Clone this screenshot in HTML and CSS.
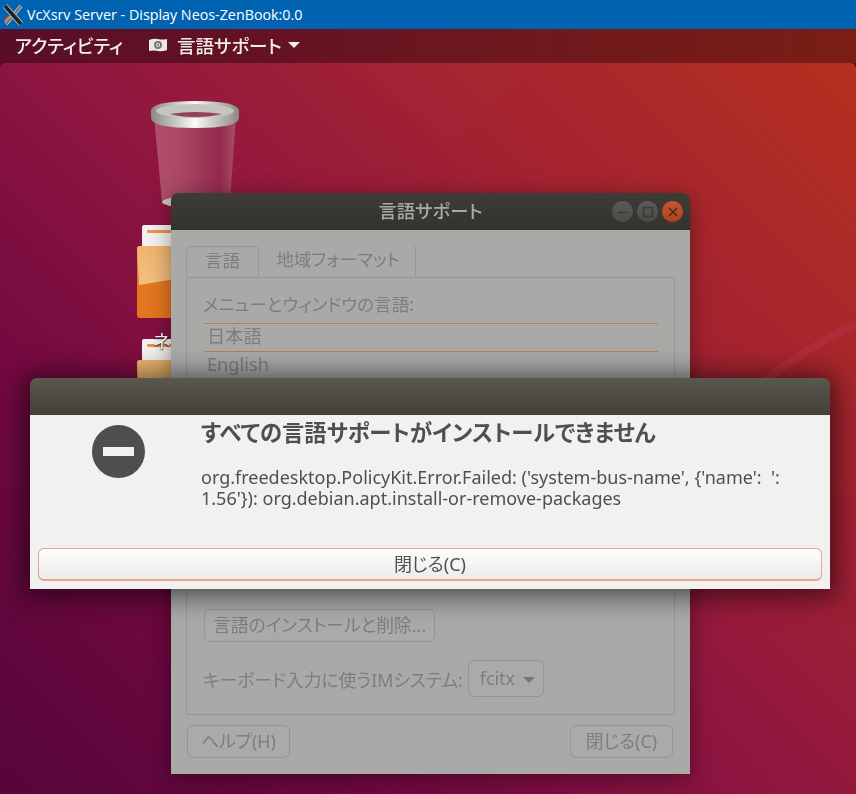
FILE: index.html
```html
<!DOCTYPE html>
<html lang="ja">
<head>
    <meta name="viewport" content="width=device-width, initial-scale=1.0">
    <title>VcXsrv Server - Display Neos-ZenBook:0.0</title>
    <link rel="stylesheet" href="styles.css">
</head>
<body>

    <div class="host-bar">
        <svg class="host-logo" width="22" height="22" viewBox="0 0 22 22">
            <path d="M2 16 Q6 10 12 12 Q8 17 4 20" fill="#c0603a"/>
            <path d="M19 2 L4 20" stroke="#d5d6d2" stroke-width="3.6"/>
            <path d="M19 2 L4 20" stroke="#6d706c" stroke-width="2.2"/>
            <path d="M3 2 L19 20" stroke="#c9ced3" stroke-width="5.4"/>
            <path d="M3 2 L19 20" stroke="#1e2227" stroke-width="3.8"/>
        </svg>
        <span>VcXsrv Server - Display Neos-ZenBook:0.0</span>
    </div>

    <div class="screen">
        <div class="top-bar">
            <span class="activities">アクティビティ</span>
            <span class="app-menu">
                <svg width="20" height="16" viewBox="0 0 20 16">
                    <path d="M1 3 Q6 1 10 2 T19 2 V13 Q14 15 10 14 T1 14 Z" fill="#e9e9e6"/>
                    <circle cx="10" cy="8" r="4" fill="#77777a"/>
                    <circle cx="10" cy="8" r="2" fill="#e9e9e6"/>
                    <circle cx="10" cy="8" r="1" fill="#66666a"/>
                </svg>
                言語サポート
                <i class="caret"></i>
            </span>
        </div>

        <div class="desktop">
            <svg class="arcs" width="856" height="731" viewBox="0 0 856 731">
                <path d="M856 261 Q805 285 765 318" fill="none" stroke="#b02c38" stroke-width="8"/>
                <path d="M340 0 H535 L455 82 Z" fill="#ffffff" opacity="0.012"/>
            </svg>

            <svg class="desk-icon trash" width="90" height="112" viewBox="0 0 90 112">
                <defs>
                    <linearGradient id="can" x1="0" x2="1" y1="0" y2="0">
                        <stop offset="0" stop-color="#b0506c"/>
                        <stop offset="0.4" stop-color="#a84462"/>
                        <stop offset="0.8" stop-color="#93294c"/>
                        <stop offset="1" stop-color="#a84f68"/>
                    </linearGradient>
                    <linearGradient id="rim" x1="0" x2="1" y1="0" y2="0">
                        <stop offset="0" stop-color="#8a8a82"/>
                        <stop offset="0.5" stop-color="#fafaf6"/>
                        <stop offset="1" stop-color="#8a8a82"/>
                    </linearGradient>
                </defs>
                <path d="M4 16 L12 102 Q45 112 80 102 L86 16 Z" fill="url(#can)"/>
                <ellipse cx="45" cy="102" rx="33" ry="6" fill="#c8c8c0"/>
                <path d="M1 11 Q1 1 45 1 Q89 1 89 11 V18 Q89 28 45 28 Q1 28 1 18 Z" fill="url(#rim)"/>
                <ellipse cx="45" cy="11" rx="39" ry="7" fill="#c4c5be"/>
                <path d="M20 14 Q45 10 72 14 Q60 17 45 17 Q30 17 20 14 Z" fill="#9a3f58"/>
            </svg>

            <svg class="desk-icon folder-a" width="50" height="96" viewBox="0 0 50 96">
                <use href="#folder"/>
            </svg>
            <svg class="desk-icon folder-b" width="50" height="96" viewBox="0 0 50 96">
                <defs>
                    <linearGradient id="folder-top" x1="0" x2="0" y1="0" y2="1">
                        <stop offset="0" stop-color="#efb46c"/>
                        <stop offset="1" stop-color="#f1c083"/>
                    </linearGradient>
                    <g id="folder">
                        <rect x="5" y="0" width="45" height="30" rx="2" fill="#f3f1ed"/>
                        <rect x="10" y="5" width="40" height="3" rx="1" fill="#ef9350"/>
                        <rect x="0" y="21" width="50" height="72" rx="3" fill="#e3761f"/>
                        <path d="M0 24 Q0 21 3 21 H50 V52 L2 60 Z" fill="url(#folder-top)"/>
                    </g>
                </defs>
                <use href="#folder"/>
            </svg>
            <span class="desk-label">ネ</span>

            <section class="window main">
                <header class="title-bar">
                    言語サポート
                    <div class="win-buttons">
                        <span class="win-btn"><svg width="12" height="12" viewBox="0 0 12 12"><path d="M1 6.5 H11" stroke="#3b3b38" stroke-width="1.6"/></svg></span>
                        <span class="win-btn"><svg width="12" height="12" viewBox="0 0 12 12"><rect x="1.5" y="1.5" width="9" height="9" fill="none" stroke="#3b3b38" stroke-width="1.6"/></svg></span>
                        <span class="win-btn close"><svg width="12" height="12" viewBox="0 0 12 12"><path d="M2 2 L10 10 M10 2 L2 10" stroke="#4a2a1c" stroke-width="1.5"/></svg></span>
                    </div>
                </header>
                <div class="main-body">
                    <div class="tabs">
                        <span class="tab active">言語</span>
                        <span class="tab">地域フォーマット</span>
                    </div>
                    <div class="panel">
                        <div class="panel-label">メニューとウィンドウの言語:</div>
                        <ul class="lang-list">
                            <li class="lang first">日本語</li>
                            <li class="lang">English</li>
                        </ul>
                        <div class="hidden-note">起動時とログイン画面にも同じ言語を使用します。</div>
                        <button class="btn install">言語のインストールと削除...</button>
                        <div class="im-row">
                            キーボード入力に使うIMシステム:
                            <span class="btn combo">fcitx <i class="caret dim"></i></span>
                        </div>
                    </div>
                    <div class="actions">
                        <button class="btn">ヘルプ(H)</button>
                        <button class="btn">閉じる(C)</button>
                    </div>
                </div>
            </section>

            <section class="window dialog">
                <header class="title-bar"></header>
                <div class="dialog-body">
                    <div class="dialog-content">
                        <div class="stop-icon"><i></i></div>
                        <div class="dialog-text">
                            <h1>すべての言語サポートがインストールできません</h1>
                            <p>org.freedesktop.PolicyKit.Error.Failed: ('system-bus-name', {'name':&nbsp; ':<br>1.56'}): org.debian.apt.install-or-remove-packages</p>
                        </div>
                    </div>
                    <button class="dialog-btn">閉じる(C)</button>
                </div>
            </section>
        </div>
    </div>

</body>
</html>
```

FILE: styles.css
```css
html, body {
    margin: 0;
    height: 100%;
    overflow: hidden;
    background: #56063a;
}

body {
    display: flex;
    flex-direction: column;
    font-family: "Noto Sans", "Noto Sans CJK JP", sans-serif;
    font-feature-settings: "palt";
}

button {
    font: inherit;
}

.host-bar {
    flex: 0 0 29px;
    display: flex;
    align-items: center;
    gap: 3px;
    padding-left: 2px;
    background: #0063b1;
    color: #fff;
    font-family: "Open Sans", sans-serif;
    font-size: 14.3px;
}

.screen {
    flex: 1;
    display: flex;
    flex-direction: column;
    background: #5f1020;
    filter: blur(0.35px);
}

.top-bar {
    flex: 0 0 34px;
    box-sizing: border-box;
    display: flex;
    align-items: center;
    gap: 25px;
    padding: 0 0 2px 15px;
    background: linear-gradient(90deg, #590d28 0%, #6b1620 50%, #7a1e15 100%);
    color: #f0eeea;
    font-size: 18.2px;
    font-weight: 500;
}

.app-menu {
    display: flex;
    align-items: center;
    gap: 9px;
    font-size: 18.5px;
}

.caret {
    width: 0;
    height: 0;
    margin-left: -3px;
    border: 6px solid transparent;
    border-top: 6px solid #f0eeea;
    border-bottom: 0;
}

.caret.dim {
    display: inline-block;
    margin-left: 3px;
    vertical-align: middle;
    border-width: 6px;
    border-top-color: #777674;
    border-bottom: 0;
}

.desktop {
    flex: 1;
    position: relative;
    overflow: hidden;
    border-radius: 6px 6px 0 0;
    background: linear-gradient(225deg, #b5301f 0%, #a5242f 25%, #901640 50%, #700840 75%, #56063a 100%);
}

.arcs {
    position: absolute;
    top: 0;
    left: 0;
}

/* desktop icons */
.desk-icon {
    position: absolute;
}

.trash {
    left: 150px;
    top: 37px;
}

.folder-a {
    left: 137px;
    top: 162px;
}

.folder-b {
    left: 137px;
    top: 276px;
}

.desk-label {
    position: absolute;
    left: 153px;
    top: 264px;
    color: #fff;
    font-size: 18px;
    text-shadow: 0 1px 2px #000;
}

/* windows */
.window {
    position: absolute;
    display: flex;
    flex-direction: column;
    border-radius: 7px 7px 0 0;
}

.title-bar {
    flex: 0 0 37px;
    box-sizing: border-box;
    position: relative;
    display: flex;
    align-items: center;
    justify-content: center;
    border-radius: 7px 7px 0 0;
}

.main {
    left: 171px;
    top: 130px;
    width: 519px;
    height: 581px;
    box-shadow: 0 4px 22px rgba(0, 0, 0, 0.4);
    color: #7e7d7b;
    font-size: 17.8px;
}

.main .title-bar {
    padding-bottom: 3px;
    background: linear-gradient(#3d3c37, #33322d);
    color: #a9a9a5;
    font-size: 18.4px;
    font-weight: 500;
}

.win-buttons {
    position: absolute;
    right: 7px;
    top: 8px;
    display: flex;
    gap: 4px;
}

.win-btn {
    width: 21px;
    height: 21px;
    display: flex;
    align-items: center;
    justify-content: center;
    border-radius: 50%;
    background: linear-gradient(#5b5b58, #4a4a47);
}

.win-btn.close {
    background: linear-gradient(#c9552d, #aa431f);
}

.main-body {
    flex: 1;
    padding: 16px 15px 0;
    background: #a9a9a7;
}

.tabs {
    display: flex;
    height: 31px;
    box-sizing: border-box;
    font-size: 17.6px;
    line-height: 26px;
}

.tab {
    padding: 0 15px 0 17px;
    border-right: 1px solid #969694;
}

.tab.active {
    padding: 0 18px;
    border: 1px solid #969694;
    border-bottom: 0;
    border-radius: 5px 5px 0 0;
}

.panel {
    height: 438px;
    box-sizing: border-box;
    padding: 13px 16px 0;
    border: 1px solid #969694;
    border-radius: 3px;
}

.panel-label {
    height: 32px;
    font-size: 17.6px;
}

.lang-list {
    margin: 0 0 0 1px;
    padding: 0;
    list-style: none;
}

.lang {
    height: 28px;
    padding-left: 3px;
    line-height: 24px;
    border-top: 1px solid #c67650;
    box-sizing: border-box;
    font-size: 18.2px;
}

.hidden-note {
    margin-top: 188px;
    height: 42px;
    font-size: 16px;
}

.btn {
    display: inline-block;
    padding: 0 11px;
    height: 33px;
    box-sizing: border-box;
    border: 1px solid #959593;
    border-radius: 6px;
    background: #aaaaa8;
    color: #7e7d7b;
    font-size: 17.8px;
    line-height: 29px;
}

.btn.install {
    margin-left: 1px;
    padding: 0 8px;
}

.im-row {
    margin-top: 18px;
    display: flex;
    align-items: center;
    gap: 5px;
}

.combo {
    height: 37px;
    line-height: 34px;
    padding: 0 8px 0 11px;
}

.actions {
    display: flex;
    justify-content: space-between;
    padding: 10px 2px 0 1px;
}

.actions .btn {
    padding: 0 13px;
}

.actions .btn:last-child {
    padding: 0 15px;
}

/* error dialog on top */
.dialog {
    left: 30px;
    top: 315px;
    width: 800px;
    height: 211px;
    box-shadow: 0 2px 26px 6px rgba(0, 0, 0, 0.55);
}

.dialog .title-bar {
    background: linear-gradient(#5a574f, #43413a);
}

.dialog-body {
    flex: 1;
    display: flex;
    flex-direction: column;
    justify-content: space-between;
    padding: 0 8px 8px;
    background: #f2f1f0;
    color: #4f4f4d;
}

.dialog-content {
    display: flex;
    gap: 56px;
    padding: 4px 0 0 54px;
}

.stop-icon {
    flex: none;
    width: 53px;
    height: 53px;
    margin-top: 6px;
    display: flex;
    align-items: center;
    justify-content: center;
    border-radius: 50%;
    background: #4e4e4c;
}

.stop-icon i {
    width: 31px;
    height: 9px;
    background: #f2f1f0;
}

.dialog-text h1 {
    margin: 0;
    font-size: 22.3px;
    line-height: 28px;
    font-weight: 700;
}

.dialog-text p {
    margin: 20px 0 0;
    font-size: 18px;
    line-height: 21px;
}

.dialog-btn {
    height: 33px;
    border: 1px solid #e5a58a;
    border-bottom-width: 2px;
    border-radius: 6px;
    background: linear-gradient(#fdfdfc, #ecebe9);
    color: #4f4f4d;
    font-size: 18px;
    padding: 0 0 2px;
}
```
